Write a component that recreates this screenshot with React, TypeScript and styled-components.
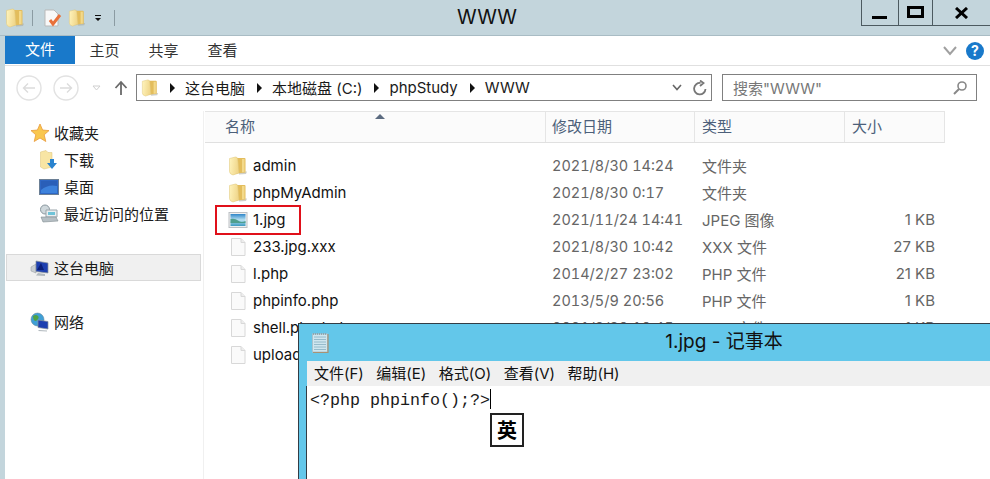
import React from "react";
import styled, { createGlobalStyle } from "styled-components";

const FONT = `Inter, "Noto Sans CJK SC", sans-serif`;

const GlobalStyle = createGlobalStyle`
  html, body {
    margin: 0;
    padding: 0;
    background: #fff;
    overflow: hidden;
  }
  body {
    font-family: ${FONT};
    color: #1a1a1a;
  }
`;

const FolderIcon: React.FC<{ size?: number; id?: string }> = ({ size = 20, id = "fg" }) => (
  <svg width={size} height={size} viewBox="0 0 20 20">
    <defs>
      <linearGradient id={id} x1="0" y1="0" x2="1" y2="0.2">
        <stop offset="0" stopColor="#fff4bd" />
        <stop offset="1" stopColor="#f0d68a" />
      </linearGradient>
    </defs>
    <path d="M11 16 L19 15.5 L18 18 L11 18.5 Z" fill="#a8a89a" opacity="0.55" />
    <path d="M7 2 L16.5 2 Q17.5 2 17.5 3 V16.5 L8 17.5 Z" fill="#e3bd5c" />
    <path d="M14 3 H16.5 V16 L14 16.3 Z" fill="#f3d98a" />
    <path d="M1.5 2.5 L7.5 1 Q9.5 1 9.8 3 L11 17 L5 19 Q1.5 18 1.5 15.5 Z" fill={`url(#${id})`} stroke="#dfc475" strokeWidth="0.5" />
  </svg>
);

const DocIcon = () => (
  <svg width="20" height="20" viewBox="0 0 20 20">
    <path d="M3.5 1.5 H13 L17 5.5 V18.5 H3.5 Z" fill="#fafafa" stroke="#d8d8d8" />
    <path d="M13 1.5 V5.5 H17" fill="#ededed" stroke="#d8d8d8" />
  </svg>
);

const PictureIcon = () => (
  <svg width="20" height="20" viewBox="0 0 20 20">
    <defs>
      <linearGradient id="sky" x1="0" y1="0" x2="0" y2="1">
        <stop offset="0" stopColor="#2f86c9" />
        <stop offset="0.5" stopColor="#b9e2f2" />
        <stop offset="1" stopColor="#3c9ac0" />
      </linearGradient>
    </defs>
    <rect x="1" y="2.5" width="18" height="15" fill="#f0f0f0" stroke="#bcc0c4" />
    <rect x="2.5" y="4" width="15" height="12" fill="url(#sky)" />
    <path d="M2.5 9 Q7 8 10 10.5 T17.5 11 V13 H2.5 Z" fill="#4f9f8e" />
  </svg>
);

const StarIcon = () => (
  <svg width="20" height="20" viewBox="0 0 20 20">
    <path d="M10 1 L12.6 7 L19 7.6 L14.2 11.8 L15.8 18.5 L10 15 L4.2 18.5 L5.8 11.8 L1 7.6 L7.4 7 Z" fill="#f9c74f" stroke="#e89a3c" strokeWidth="0.8" />
  </svg>
);

const DownloadsIcon = () => (
  <svg width="20" height="20" viewBox="0 0 20 20">
    <path d="M1.5 2 L7 0.5 L9 2.5 L13 2.5 L13 17 L5 19 L1.5 17 Z" fill="#f8e5a4" stroke="#dcc277" strokeWidth="0.5" />
    <path d="M11 9 H15 V13 H18 L13 19 L8 13 H11 Z" fill="#2a83cf" />
  </svg>
);

const DesktopIcon = () => (
  <svg width="20" height="18" viewBox="0 0 20 18">
    <rect x="0.5" y="1.5" width="19" height="15" fill="#2e67c4" stroke="#6b7f95" />
    <rect x="2" y="3" width="16" height="12" fill="#3d82dc" />
    <path d="M2 3 H18 V8 Q9 6 2 12 Z" fill="#2a5fb8" />
  </svg>
);

const RecentIcon = () => (
  <svg width="20" height="20" viewBox="0 0 20 20">
    <circle cx="6" cy="5.5" r="4.5" fill="#cfd8dc" stroke="#8a979e" />
    <path d="M7 6 H18 V13 H7 Z" fill="#e9eef0" stroke="#9aa5ab" />
    <path d="M9 8 H16 V11 H9 Z" fill="#6fc3d8" />
    <path d="M2 13 L17 13 L19 17 L4 18 Z" fill="#b6bfc4" stroke="#808b91" strokeWidth="0.6" />
  </svg>
);

const ComputerIcon = () => (
  <svg width="20" height="20" viewBox="0 0 20 20">
    <path d="M1 9 L6 6 V15 L1 13 Z" fill="#c9ced2" stroke="#8f979c" strokeWidth="0.5" />
    <path d="M6 3 L18 5 V15 L6 13.5 Z" fill="#1d3fb0" stroke="#8b939a" strokeWidth="0.7" />
    <path d="M7 12 L11 5 L14 12 Z" fill="#0a1f7a" />
    <path d="M8 15 L15 16 V18 L6 17.5 Z" fill="#b2b9be" />
  </svg>
);

const NetworkIcon = () => (
  <svg width="20" height="20" viewBox="0 0 20 20">
    <circle cx="7.5" cy="7.5" r="6.5" fill="#3f9fd6" stroke="#5b7f95" strokeWidth="0.5" />
    <path d="M3 4 Q6 2 8 4 T6 9 Q3 9 3 4 Z M9 9 Q12 8 12 12 L9 13 Z" fill="#4fa346" />
    <path d="M8 8 L18 9.5 V17 L8 15.5 Z" fill="#1d3fb0" stroke="#8b939a" strokeWidth="0.7" />
    <path d="M9 18 L17 18.5 V19.5 L8 19 Z" fill="#b2b9be" />
  </svg>
);

const NotepadIcon = () => (
  <svg width="20" height="22" viewBox="0 0 20 22">
    <rect x="1.5" y="2" width="15" height="18" fill="#cfe6ef" stroke="#a9c2cc" />
    <path d="M3 5 H15 M3 7.5 H15 M3 10 H15 M3 12.5 H15 M3 15 H15 M3 17.5 H15" stroke="#86b0c2" strokeWidth="0.8" />
    <path d="M17 2 V20.5 H2" fill="none" stroke="#a89274" strokeWidth="1.2" />
    <path d="M2 2 H16" stroke="#8a9aa0" strokeWidth="1.4" strokeDasharray="1 1" />
  </svg>
);

const NavCircle: React.FC<{ dir: "left" | "right" }> = ({ dir }) => (
  <svg width="26" height="26" viewBox="0 0 26 26">
    <circle cx="13" cy="13" r="12" fill="none" stroke="#e2e2e2" strokeWidth="1.4" />
    <path
      d={dir === "left" ? "M19 13 H8 M12 8.5 L7.5 13 L12 17.5" : "M7 13 H18 M14 8.5 L18.5 13 L14 17.5"}
      fill="none"
      stroke="#dcdcdc"
      strokeWidth="1.4"
    />
  </svg>
);

const Crumb = () => (
  <svg width="7" height="10" viewBox="0 0 7 10">
    <path d="M1 0 L6 5 L1 10 Z" fill="#111" />
  </svg>
);

const Frame = styled.div`
  position: relative;
  width: 990px;
  height: 479px;
  background: #c3d5dc;
  overflow: hidden;
`;

const QuickBar = styled.div`
  height: 35px;
  display: flex;
  align-items: center;
  padding-left: 5px;
  border-bottom: 1px solid #a9bcc4;
`;

const QuickIcon = styled.div<{ $ml: number }>`
  display: flex;
  margin-left: ${(p) => p.$ml}px;
`;

const QuickSep = styled.div<{ $ml: number }>`
  width: 1px;
  height: 16px;
  background: #8b9ba2;
  margin-left: ${(p) => p.$ml}px;
`;

const TitleText = styled.div`
  position: absolute;
  top: 5px;
  left: 0;
  width: 974px;
  text-align: center;
  font-size: 20px;
  line-height: 24px;
  color: #111;
`;

const Caption = styled.div`
  position: absolute;
  top: 0;
  left: 861px;
  display: flex;
  height: 26px;
  border: 1px solid #4c5a60;
  border-top: none;
  box-sizing: border-box;
`;

const CaptionBtn = styled.div<{ $w: number }>`
  width: ${(p) => p.$w}px;
  display: flex;
  align-items: center;
  justify-content: center;
  & + & {
    border-left: 1px solid #4c5a60;
  }
`;

const Shell = styled.div`
  margin-left: 5px;
  background: #fff;
  height: 443px;
`;

const Ribbon = styled.div`
  height: 29px;
  display: flex;
  align-items: flex-start;
  border-bottom: 1px solid #e0e0e0;
  box-sizing: content-box;
  position: relative;
`;

const FileTab = styled.div`
  width: 70px;
  height: 28px;
  background: #1979ca;
  color: #fff;
  font-size: 15px;
  line-height: 28px;
  text-align: center;
`;

const RibbonTab = styled.div`
  width: 59px;
  font-size: 15px;
  line-height: 29px;
  text-align: center;
  color: #333;
`;

const RibbonRight = styled.div`
  margin-left: auto;
  display: flex;
  align-items: center;
  gap: 9px;
  height: 29px;
  padding-right: 6px;
`;

const HelpBadge = styled.div`
  width: 18px;
  height: 18px;
  border-radius: 50%;
  background: #1979ca;
  color: #fff;
  font-size: 14px;
  font-weight: 700;
  line-height: 18px;
  text-align: center;
`;

const NavRow = styled.div`
  height: 45px;
  display: flex;
  align-items: center;
  padding-left: 11px;
  padding-bottom: 2px;
  box-sizing: border-box;
`;

const NavGap = styled.div<{ $w: number }>`
  width: ${(p) => p.$w}px;
  flex: none;
  display: flex;
  align-items: center;
  justify-content: center;
`;

const AddressBox = styled.div`
  width: 576px;
  height: 27px;
  box-sizing: border-box;
  border: 1px solid #808080;
  display: flex;
  align-items: center;
  padding-left: 4px;
  font-size: 15px;
  color: #1a1a1a;
`;

const CrumbText = styled.span`
  margin: 0 11px 0 9px;
  white-space: nowrap;
`;

const AddressTools = styled.div`
  margin-left: auto;
  display: flex;
  align-items: center;
  gap: 10px;
  padding-right: 3px;
`;

const SearchBox = styled.div`
  width: 255px;
  height: 27px;
  box-sizing: border-box;
  margin-left: 10px;
  border: 1px solid #808080;
  display: flex;
  align-items: center;
  justify-content: space-between;
  padding: 0 8px 0 10px;
  font-size: 15px;
  color: #777;
`;

const Body = styled.div`
  display: flex;
  height: 369px;
`;

const Sidebar = styled.div`
  width: 198px;
  flex: none;
  border-right: 1px solid #f0f0f0;
  box-sizing: content-box;
  padding-top: 8px;
`;

const NavItem = styled.div<{ $sub?: boolean; $active?: boolean; $mt?: number }>`
  height: 27px;
  box-sizing: border-box;
  margin-top: ${(p) => p.$mt ?? 0}px;
  margin-left: 1px;
  width: 195px;
  display: flex;
  align-items: center;
  gap: ${(p) => (p.$sub ? 5 : 4)}px;
  padding-left: ${(p) => (p.$sub ? 32 : 23)}px;
  font-size: 15px;
  color: #1a1a1a;
  background: ${(p) => (p.$active ? "#f0f0f0" : "transparent")};
  border: 1px solid ${(p) => (p.$active ? "#d9d9d9" : "transparent")};
`;

const Content = styled.div`
  flex: 1;
  padding-left: 1px;
  position: relative;
`;

const SortArrow = styled.div`
  position: absolute;
  top: 3px;
  left: 171px;
  width: 0;
  height: 0;
  border-left: 5px solid transparent;
  border-right: 5px solid transparent;
  border-bottom: 5px solid #5c6b80;
`;

const HeaderRow = styled.div`
  width: 740px;
  height: 32px;
  box-sizing: border-box;
  display: flex;
  background: #fbfbfb;
  border-top: 1px solid #e5e5e5;
  border-bottom: 1px solid #e0e0e0;
  border-right: 1px solid #e5e5e5;
`;

const HeaderCell = styled.div<{ $w: number; $pl: number }>`
  width: ${(p) => p.$w}px;
  flex: none;
  box-sizing: border-box;
  padding-left: ${(p) => p.$pl}px;
  font-size: 15px;
  line-height: 30px;
  color: #4c607a;
  & + & {
    border-left: 1px solid #e5e5e5;
  }
`;

const Rows = styled.div`
  padding-top: 9px;
`;

const Row = styled.div`
  width: 740px;
  height: 27px;
  display: flex;
  align-items: center;
  font-size: 15px;
`;

const NameCell = styled.div`
  width: 347px;
  flex: none;
  display: flex;
  align-items: center;
  gap: 5px;
  padding-left: 23px;
  box-sizing: border-box;
  color: #111;
`;

const DateCell = styled.div`
  width: 150px;
  flex: none;
  color: #666;
  font-size: 14.5px;
  font-variant-numeric: tabular-nums;
`;

const TypeCell = styled.div`
  width: 150px;
  flex: none;
  color: #666;
`;

const SizeCell = styled.div`
  width: 83px;
  flex: none;
  text-align: right;
  color: #666;
`;

const Highlight = styled.span`
  position: absolute;
  top: -5px;
  left: -38px;
  width: 86px;
  height: 30px;
  box-sizing: border-box;
  border: 2px solid #e0101a;
  pointer-events: none;
`;

const NameWrap = styled.span`
  position: relative;
`;

const Notepad = styled.div`
  position: absolute;
  left: 298px;
  top: 323px;
  width: 700px;
  height: 160px;
  box-sizing: border-box;
  background: #63c7ea;
  border: 1px solid #333c44;
  padding-left: 8px;
`;

const NoteTitle = styled.div`
  height: 37px;
  display: flex;
  align-items: center;
  margin-left: 4px;
  position: relative;
`;

const NoteTitleText = styled.div`
  position: absolute;
  left: 293px;
  width: 240px;
  top: 6px;
  text-align: center;
  font-size: 19px;
  line-height: 24px;
  color: #111;
`;

const NoteMenu = styled.div`
  height: 25px;
  background: #f0f0f0;
  display: flex;
  align-items: center;
  gap: 12.5px;
  padding-left: 7px;
  padding-bottom: 2px;
  box-sizing: border-box;
  font-size: 15px;
  color: #111;
`;

const NoteEdit = styled.div`
  height: 100px;
  background: #fff;
  position: relative;
  border-left: 1px solid #333c44;
  margin-left: -1px;
  padding: 3px 0 0 3px;
  font-family: "Liberation Mono", monospace;
  font-size: 16.67px;
  line-height: 24px;
  color: #1a1a1a;
  white-space: pre;
`;

const Caret = styled.span`
  display: inline-block;
  width: 1px;
  height: 20px;
  background: #000;
  vertical-align: -4px;
`;

const ImeBadge = styled.div`
  position: absolute;
  left: 183px;
  top: 27px;
  width: 34px;
  height: 34px;
  box-sizing: border-box;
  border: 2px solid #222;
  background: #fff;
  font-family: "Noto Sans CJK SC", sans-serif;
  font-size: 20px;
  font-weight: 700;
  line-height: 29px;
  text-align: center;
  color: #000;
`;

type FileRow = { name: string; date: string; type: string; size: string; icon: "folder" | "doc" | "pic" };

const files: FileRow[] = [
  { name: "admin", date: "2021/8/30 14:24", type: "文件夹", size: "", icon: "folder" },
  { name: "phpMyAdmin", date: "2021/8/30 0:17", type: "文件夹", size: "", icon: "folder" },
  { name: "1.jpg", date: "2021/11/24 14:41", type: "JPEG 图像", size: "1 KB", icon: "pic" },
  { name: "233.jpg.xxx", date: "2021/8/30 10:42", type: "XXX 文件", size: "27 KB", icon: "doc" },
  { name: "l.php", date: "2014/2/27 23:02", type: "PHP 文件", size: "21 KB", icon: "doc" },
  { name: "phpinfo.php", date: "2013/5/9 20:56", type: "PHP 文件", size: "1 KB", icon: "doc" },
  { name: "shell.php.bak", date: "2021/8/30 10:45", type: "BAK 文件", size: "1 KB", icon: "doc" },
  { name: "upload.php", date: "2021/8/30 10:50", type: "PHP 文件", size: "2 KB", icon: "doc" },
];

const App: React.FC = () => {
  return (
    <Frame>
      <GlobalStyle />
      <QuickBar>
        <QuickIcon $ml={0}><FolderIcon id="q1" /></QuickIcon>
        <QuickSep $ml={7} />
        <QuickIcon $ml={10}>
          <svg width="20" height="20" viewBox="0 0 20 20">
            <path d="M2 2 H11 L15 6 V18 H2 Z" fill="#f8f8f8" stroke="#b9b9b9" />
            <path d="M7 12 L10 16 L17 7" fill="none" stroke="#e8703a" strokeWidth="3" />
          </svg>
        </QuickIcon>
        <QuickIcon $ml={5}><FolderIcon id="q2" size={18} /></QuickIcon>
        <QuickIcon $ml={8}>
          <svg width="8" height="8" viewBox="0 0 8 8">
            <path d="M1 1 H7 V2 H1 Z M1 4 H7 L4 7 Z" fill="#111" />
          </svg>
        </QuickIcon>
        <QuickSep $ml={12} />
      </QuickBar>
      <TitleText>WWW</TitleText>
      <Caption>
        <CaptionBtn $w={36}>
          <svg width="16" height="14" viewBox="0 0 16 14"><rect x="0" y="10" width="15" height="3" fill="#000" /></svg>
        </CaptionBtn>
        <CaptionBtn $w={33}>
          <svg width="17" height="13" viewBox="0 0 17 13"><rect x="1.5" y="1.5" width="14" height="9" fill="none" stroke="#000" strokeWidth="3" /></svg>
        </CaptionBtn>
        <CaptionBtn $w={57}>
          <svg width="14" height="12" viewBox="0 0 14 12"><path d="M1 1 L12 11 M12 1 L1 11" stroke="#000" strokeWidth="3" /></svg>
        </CaptionBtn>
      </Caption>
      <Shell>
        <Ribbon>
          <FileTab>文件</FileTab>
          <RibbonTab>主页</RibbonTab>
          <RibbonTab>共享</RibbonTab>
          <RibbonTab>查看</RibbonTab>
          <RibbonRight>
            <svg width="14" height="10" viewBox="0 0 14 10"><path d="M1 1 L7 8 L13 1" fill="none" stroke="#a0a0a0" strokeWidth="2" /></svg>
            <HelpBadge>?</HelpBadge>
          </RibbonRight>
        </Ribbon>
        <NavRow>
          <NavCircle dir="left" />
          <NavGap $w={11} />
          <NavCircle dir="right" />
          <NavGap $w={34}>
            <svg width="9" height="6" viewBox="0 0 9 6"><path d="M1 1 H8 L4.5 5 Z" fill="none" stroke="#cfcfcf" /></svg>
          </NavGap>
          <svg width="16" height="16" viewBox="0 0 16 16"><path d="M8 15 V2 M2.5 8 L8 2 L13.5 8" fill="none" stroke="#6a6a6a" strokeWidth="1.8" /></svg>
          <NavGap $w={7} />
          <AddressBox>
            <FolderIcon id="addr" size={18} />
            <NavGap $w={10} />
            <Crumb />
            <CrumbText>这台电脑</CrumbText>
            <Crumb />
            <CrumbText>本地磁盘 (C:)</CrumbText>
            <Crumb />
            <CrumbText>phpStudy</CrumbText>
            <Crumb />
            <CrumbText>WWW</CrumbText>
            <AddressTools>
              <svg width="10" height="7" viewBox="0 0 10 7"><path d="M1 1 L5 5.5 L9 1" fill="none" stroke="#666" strokeWidth="1.6" /></svg>
              <svg width="16" height="16" viewBox="0 0 16 16"><path d="M13.5 9 A5.7 5.7 0 1 1 8.5 3 M8 0.5 L11.5 3 L8 6" fill="none" stroke="#777" strokeWidth="1.8" /></svg>
            </AddressTools>
          </AddressBox>
          <SearchBox>
            <span>搜索"WWW"</span>
            <svg width="16" height="16" viewBox="0 0 16 16"><circle cx="10" cy="6" r="4" fill="none" stroke="#888" strokeWidth="1.6" /><path d="M7 9 L2 14" stroke="#888" strokeWidth="2" /></svg>
          </SearchBox>
        </NavRow>
        <Body>
          <Sidebar>
            <NavItem><StarIcon />收藏夹</NavItem>
            <NavItem $sub><DownloadsIcon />下载</NavItem>
            <NavItem $sub><DesktopIcon />桌面</NavItem>
            <NavItem $sub><RecentIcon />最近访问的位置</NavItem>
            <NavItem $active $mt={27}><ComputerIcon />这台电脑</NavItem>
            <NavItem $mt={27}><NetworkIcon />网络</NavItem>
          </Sidebar>
          <Content>
            <SortArrow />
            <HeaderRow>
              <HeaderCell $w={340} $pl={20}>名称</HeaderCell>
              <HeaderCell $w={149} $pl={6}>修改日期</HeaderCell>
              <HeaderCell $w={150} $pl={7}>类型</HeaderCell>
              <HeaderCell $w={100} $pl={7}>大小</HeaderCell>
            </HeaderRow>
            <Rows>
              {files.map((f) => (
                <Row key={f.name}>
                  <NameCell>
                    {f.icon === "folder" && <FolderIcon id={`row-${f.name}`} />}
                    {f.icon === "doc" && <DocIcon />}
                    {f.icon === "pic" && <PictureIcon />}
                    <NameWrap>
                      {f.name}
                      {f.name === "1.jpg" && <Highlight />}
                    </NameWrap>
                  </NameCell>
                  <DateCell>{f.date}</DateCell>
                  <TypeCell>{f.type}</TypeCell>
                  <SizeCell>{f.size}</SizeCell>
                </Row>
              ))}
            </Rows>
          </Content>
        </Body>
      </Shell>
      <Notepad>
        <NoteTitle>
          <NotepadIcon />
          <NoteTitleText>1.jpg - 记事本</NoteTitleText>
        </NoteTitle>
        <NoteMenu>
          <span>文件(F)</span>
          <span>编辑(E)</span>
          <span>格式(O)</span>
          <span>查看(V)</span>
          <span>帮助(H)</span>
        </NoteMenu>
        <NoteEdit>
          {"<?php phpinfo();?>"}
          <Caret />
          <ImeBadge>英</ImeBadge>
        </NoteEdit>
      </Notepad>
    </Frame>
  );
};

export default App;
